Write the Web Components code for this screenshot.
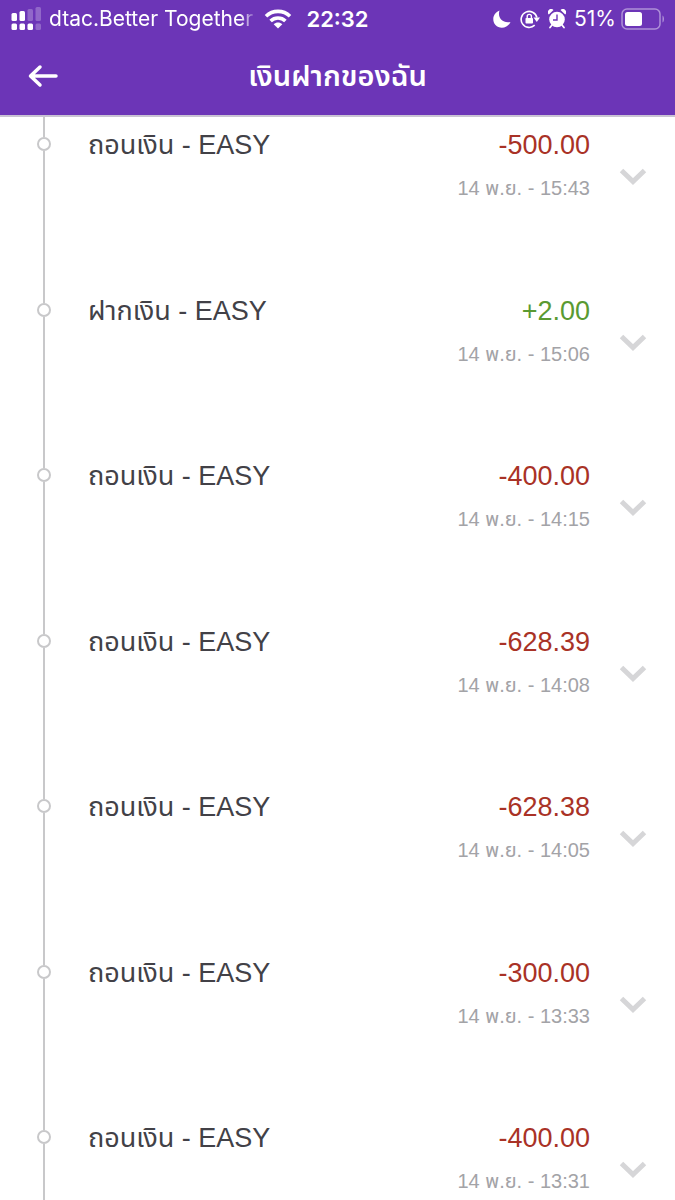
<!DOCTYPE html>
<html lang="th">
<head>
<meta charset="utf-8">
<meta name="viewport" content="width=device-width, initial-scale=1">
<title>เงินฝากของฉัน</title>
<style>
    body {
        margin: 0;
        background: #fff;
        font-family: "Liberation Sans", "Noto Sans Thai", "Noto Sans", sans-serif;
    }
</style>
</head>
<body>
<deposit-page></deposit-page>

<script>
const transactions = [
    { title: 'ถอนเงิน - EASY', amount: '-500.00', date: '14 พ.ย. - 15:43' },
    { title: 'ฝากเงิน - EASY', amount: '+2.00', date: '14 พ.ย. - 15:06' },
    { title: 'ถอนเงิน - EASY', amount: '-400.00', date: '14 พ.ย. - 14:15' },
    { title: 'ถอนเงิน - EASY', amount: '-628.39', date: '14 พ.ย. - 14:08' },
    { title: 'ถอนเงิน - EASY', amount: '-628.38', date: '14 พ.ย. - 14:05' },
    { title: 'ถอนเงิน - EASY', amount: '-300.00', date: '14 พ.ย. - 13:33' },
    { title: 'ถอนเงิน - EASY', amount: '-400.00', date: '14 พ.ย. - 13:31' }
];

class StatusBar extends HTMLElement {
    constructor() {
        super();
        this.attachShadow({ mode: 'open' });
    }

    connectedCallback() {
        this.shadowRoot.innerHTML = `
            <style>
                :host {
                    display: grid;
                    grid-template-columns: 1fr auto 1fr;
                    align-items: center;
                    height: 37px;
                    padding: 0 10px;
                    color: #fff;
                    font: 21px/24px Inter, sans-serif;
                }

                .side {
                    display: flex;
                    align-items: center;
                    min-width: 0;
                }

                .left {
                    gap: 7px;
                }

                .right {
                    justify-content: flex-end;
                }

                .carrier {
                    flex: 0 1 208px;
                    overflow: hidden;
                    white-space: nowrap;
                    -webkit-mask-image: linear-gradient(to right, #000 92%, transparent);
                    mask-image: linear-gradient(to right, #000 92%, transparent);
                }

                .time {
                    font-size: 22px;
                    font-weight: 600;
                }

                .icons {
                    display: flex;
                    align-items: center;
                    gap: 8px;
                    margin-right: 8px;
                }

                .battery {
                    margin-left: 5px;
                }

                svg {
                    display: block;
                    flex: none;
                }
            </style>
            <div class="side left">
                <svg width="32" height="24" viewBox="0 0 32 24" fill="#fff" aria-hidden="true">
                    <rect x="1.500" y="6" width="5.500" height="8" rx="1.500"/>
                    <rect x="9.500" y="4" width="5.500" height="10" rx="1.500"/>
                    <rect x="17.500" y="2" width="5.500" height="12" rx="1.500" opacity=".25"/>
                    <rect x="25.500" y="0" width="5.500" height="14" rx="1.500" opacity=".25"/>
                    <rect x="1.500" y="16.500" width="5.500" height="6.500" rx="1.500"/>
                    <rect x="9.500" y="16.500" width="5.500" height="6.500" rx="1.500"/>
                    <rect x="17.500" y="16.500" width="5.500" height="6.500" rx="1.500"/>
                    <rect x="25.500" y="16.500" width="5.500" height="6.500" rx="1.500" opacity=".25"/>
                </svg>
                <span class="carrier">dtac.Better Together</span>
                <svg width="28" height="20" viewBox="0 0 28 20" fill="none" stroke="#fff" stroke-width="3.6" aria-hidden="true">
                    <path d="M2 7.2C8.6.8 19.400.8 26 7.200"/>
                    <path d="M6.600 12C10.800 8 17.200 8 21.400 12"/>
                    <path d="M9.700 15.200C12.200 12.900 15.800 12.900 18.300 15.200L14 19.600Z" fill="#fff" stroke="none"/>
                </svg>
            </div>
            <span class="time">22:32</span>
            <div class="side right">
                <div class="icons">
                    <svg width="20" height="20" viewBox="0 0 20 20" fill="#fff" aria-hidden="true">
                        <path d="M7.500 1.500C5.200 8.500 10.500 14.700 18.500 13C15.500 19.500 7.500 20.500 3.500 16C-.8 11 1.500 3.700 7.500 1.500Z"/>
                    </svg>
                    <svg width="20" height="20" viewBox="0 0 20 20" fill="#fff" aria-hidden="true">
                        <path d="M14.700 16.200A8 8 0 1 1 16.900 8.500" fill="none" stroke="#fff" stroke-width="1.600"/>
                        <path d="M13.500 8.500H20L16.800 13Z"/>
                        <rect x="5.500" y="9" width="7.500" height="5.500" rx=".8"/>
                        <path d="M7.200 9V7.500a2.100 2.100 0 0 1 4.200 0V9" fill="none" stroke="#fff" stroke-width="1.400"/>
                    </svg>
                    <svg width="18" height="20" viewBox="0 0 18 20" fill="#fff" aria-hidden="true">
                        <circle cx="9" cy="10.500" r="7.800"/>
                        <path d="M.8 5.500A3.200 3.200 0 0 1 5.500 1ZM12.500 1A3.200 3.200 0 0 1 17.200 5.500Z"/>
                        <path d="M4 16L2 18.500M14 16L16 18.500" stroke="#fff" stroke-width="1.800" stroke-linecap="round"/>
                        <path d="M9 5.500V11H5" fill="none" stroke="#6c35b7" stroke-width="1.400"/>
                    </svg>
                </div>
                <span>51%</span>
                <svg class="battery" width="44" height="22" viewBox="0 0 44 22" aria-hidden="true">
                    <rect x="1" y="1" width="38" height="20" rx="5" fill="none" stroke="#fff" stroke-width="1.500" opacity=".45"/>
                    <rect x="4" y="4" width="17" height="14" rx="2.500" fill="#fff"/>
                    <path d="M41.500 7.500c2 1 2 6 0 7Z" fill="#fff" opacity=".45"/>
                </svg>
            </div>
        `;
    }
}

class AppHeader extends HTMLElement {
    constructor() {
        super();
        this.attachShadow({ mode: 'open' });
    }

    connectedCallback() {
        this.shadowRoot.innerHTML = `
            <style>
                :host {
                    display: grid;
                    grid-template-columns: 60px 1fr 60px;
                    align-items: center;
                    height: 78px;
                    color: #fff;
                }

                button {
                    justify-self: end;
                    padding: 0;
                    border: 0;
                    background: none;
                    color: inherit;
                    cursor: pointer;
                }

                svg {
                    display: block;
                }

                h1 {
                    margin: 0;
                    font-size: 29px;
                    font-weight: 600;
                    line-height: 36px;
                    text-align: center;
                }
            </style>
            <button type="button" aria-label="ย้อนกลับ">
                <svg width="32" height="24" viewBox="0 0 32 24" fill="none" stroke="#fff" stroke-width="3.500" stroke-linecap="round" stroke-linejoin="round">
                    <path d="M28 12H3M12 3L2.500 12L12 21"/>
                </svg>
            </button>
            <h1><slot></slot></h1>
        `;
    }
}

class TransactionItem extends HTMLElement {
    constructor() {
        super();
        this.attachShadow({ mode: 'open' });
    }

    connectedCallback() {
        this.render();
    }

    render() {
        const amount = this.getAttribute('amount');
        const kind = amount.startsWith('+') ? 'in' : 'out';

        this.shadowRoot.innerHTML = `
            <style>
                :host {
                    display: grid;
                    grid-template-columns: 88px 1fr auto 85px;
                    min-height: 166px;
                }

                :host(:nth-child(even)) {
                    min-height: 165px;
                }

                /* vertical line with the node circle on it */
                .rail {
                    display: flex;
                    flex-direction: column;
                    align-items: center;
                }

                .rail::before,
                .rail::after {
                    content: "";
                    width: 2px;
                    height: 20px;
                    background: #c8c8ca;
                }

                .rail::after {
                    flex: 1;
                }

                .dot {
                    box-sizing: border-box;
                    width: 14px;
                    height: 14px;
                    border: 2px solid #c8c8ca;
                    border-radius: 50%;
                }

                .title,
                .amount {
                    padding-top: 12px;
                    font-size: 27px;
                    line-height: 32px;
                }

                .title {
                    color: #424147;
                }

                .side {
                    text-align: right;
                    white-space: nowrap;
                }

                .amount.out {
                    color: #a93226;
                }

                .amount.in {
                    color: #5a9a32;
                }

                .date {
                    display: block;
                    margin-top: 15px;
                    color: #a3a3a7;
                    font-size: 20px;
                    line-height: 24px;
                }

                button {
                    justify-self: center;
                    align-self: start;
                    margin-top: 51px;
                    padding: 0;
                    border: 0;
                    background: none;
                    cursor: pointer;
                }

                svg {
                    display: block;
                }
            </style>
            <div class="rail"><span class="dot"></span></div>
            <div class="title">${this.getAttribute('title-text')}</div>
            <div class="side">
                <div class="amount ${kind}">${amount}</div>
                <time class="date">${this.getAttribute('date')}</time>
            </div>
            <button type="button" aria-label="ดูรายละเอียด">
                <svg width="28" height="18" viewBox="0 0 28 18" fill="none" stroke="#d6d6d8" stroke-width="5">
                    <path d="M2.500 2.500L14 13.500L25.500 2.500"/>
                </svg>
            </button>
        `;
    }
}

class DepositPage extends HTMLElement {
    constructor() {
        super();
        this.attachShadow({ mode: 'open' });
    }

    connectedCallback() {
        this.shadowRoot.innerHTML = `
            <style>
                :host {
                    display: flex;
                    flex-direction: column;
                    height: 100vh;
                    overflow: hidden;
                }

                .top {
                    flex: none;
                    background: #6c35b7;
                    border-bottom: 2px solid #c9c3d3;
                }

                main {
                    flex: 1;
                    min-height: 0;
                    overflow: hidden;
                }
            </style>
            <div class="top">
                <status-bar></status-bar>
                <app-header>เงินฝากของฉัน</app-header>
            </div>
            <main></main>
        `;
        this.addItems();
    }

    addItems() {
        const list = this.shadowRoot.querySelector('main');
        transactions.forEach((t) => {
            const item = document.createElement('transaction-item');
            item.setAttribute('title-text', t.title);
            item.setAttribute('amount', t.amount);
            item.setAttribute('date', t.date);
            list.appendChild(item);
        });
    }
}

customElements.define('status-bar', StatusBar);
customElements.define('app-header', AppHeader);
customElements.define('transaction-item', TransactionItem);
customElements.define('deposit-page', DepositPage);
</script>
</body>
</html>
